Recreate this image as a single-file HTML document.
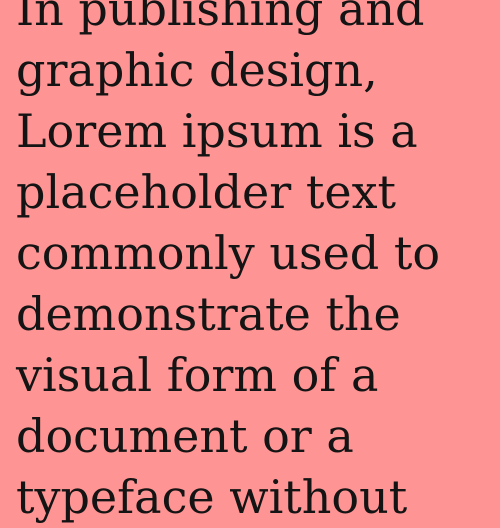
<!DOCTYPE html>
<html><head><style>
html,body{margin:0;padding:0;width:500px;height:500px;overflow:hidden;background:#ff9494;}
.t{position:absolute;left:16px;top:-21px;font-family:"DejaVu Serif","Liberation Serif",serif;font-size:46px;line-height:61px;color:#141414;white-space:nowrap;}
</style></head><body>
<div class="t">In publishing and<br>graphic design,<br>Lorem ipsum is a<br>placeholder text<br>commonly used to<br>demonstrate the<br>visual form of a<br>document or a<br>typeface without</div>
</body></html>
